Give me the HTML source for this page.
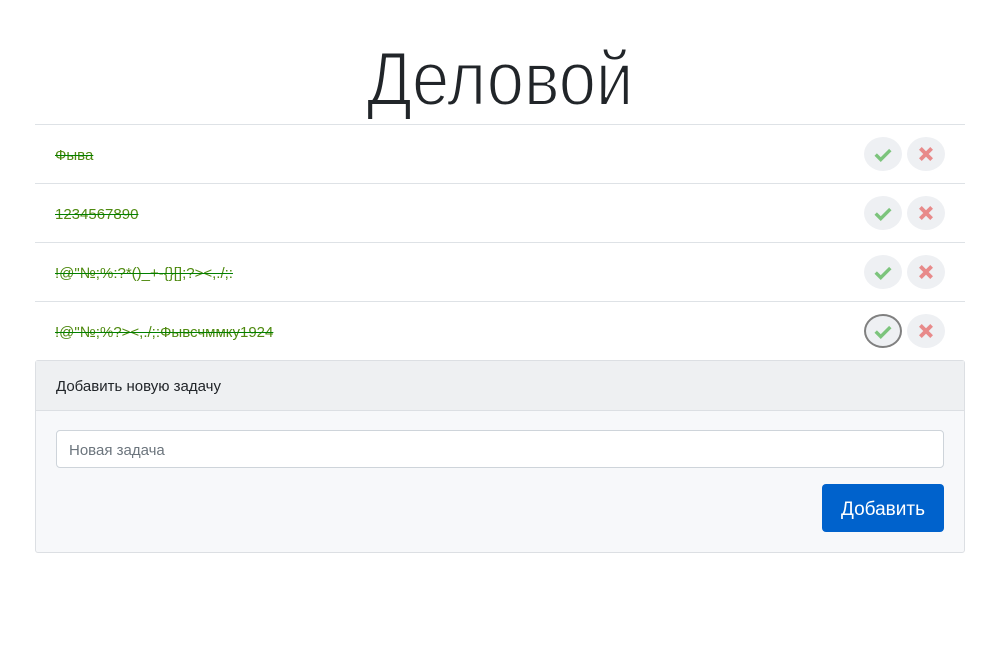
<!DOCTYPE html>
<html><head><meta charset="utf-8"><style>
body{margin:0;background:#fff;font-family:"Liberation Sans","DejaVu Sans",sans-serif;color:#212529;}
h1{margin:0;position:absolute;top:38px;left:0;width:1000px;text-align:center;font-weight:400;font-size:76px;line-height:84px;color:#212529;transform:scaleX(0.88);-webkit-text-stroke:2px #fff;paint-order:normal}
.list{position:absolute;top:124px;left:35px;width:930px}
.row{height:58px;border-top:1px solid #dee2e6;position:relative}
.row span{position:absolute;left:20px;top:22px;font-size:15px;color:#4f8a10;text-decoration:line-through;text-decoration-color:#008000}
.b{position:absolute;top:12px;width:38px;height:34px;border-radius:50%;background:#eef0f3;box-sizing:border-box}
.ok{left:829px}.no{left:872px}
.b svg{position:absolute;left:10px;top:8px}
.card{position:absolute;top:360px;left:35px;width:928px;height:191px;border:1px solid #dcdfe3;border-radius:3px;background:#f7f8fa}
.hd{height:49px;background:#eef0f2;border-bottom:1px solid #dcdfe3;font-size:15px;line-height:52px;padding-left:20px}
.in{position:absolute;left:20px;top:69px;border:1px solid #ced4da;border-radius:4px;background:#fff;font-size:15px;color:#6c757d;line-height:40px;padding-left:12px;box-sizing:border-box;width:888px;height:38px}
.btn{position:absolute;left:786px;top:123px;width:122px;height:48px;background:#0062cc;border-radius:4px;color:#fff;font-size:19px;line-height:52px;text-align:center}
</style></head><body>
<h1>Деловой</h1>
<div class="list">
<div class="row"><span>Фыва</span><div class="b ok"><svg width="18" height="18" viewBox="0 0 16 16"><path d="M1.5 8.5l4.5 4.5 8.5-8.5" stroke="#7cc47c" stroke-width="3" fill="none"/></svg></div><div class="b no"><svg width="18" height="18" viewBox="0 0 16 16"><path d="M3 3l10 10M13 3L3 13" stroke="#e88a8a" stroke-width="3.4"/></svg></div></div>
<div class="row"><span>1234567890</span><div class="b ok"><svg width="18" height="18" viewBox="0 0 16 16"><path d="M1.5 8.5l4.5 4.5 8.5-8.5" stroke="#7cc47c" stroke-width="3" fill="none"/></svg></div><div class="b no"><svg width="18" height="18" viewBox="0 0 16 16"><path d="M3 3l10 10M13 3L3 13" stroke="#e88a8a" stroke-width="3.4"/></svg></div></div>
<div class="row"><span>!@"№;%:?*()_+-{}[];?&gt;&lt;,./;:</span><div class="b ok"><svg width="18" height="18" viewBox="0 0 16 16"><path d="M1.5 8.5l4.5 4.5 8.5-8.5" stroke="#7cc47c" stroke-width="3" fill="none"/></svg></div><div class="b no"><svg width="18" height="18" viewBox="0 0 16 16"><path d="M3 3l10 10M13 3L3 13" stroke="#e88a8a" stroke-width="3.4"/></svg></div></div>
<div class="row"><span>!@"№;%?&gt;&lt;,./;:Фывсчммку1924</span><div class="b ok" style="border:2px solid #808080"><svg width="18" height="18" viewBox="0 0 16 16" style="left:8px;top:6px"><path d="M1.5 8.5l4.5 4.5 8.5-8.5" stroke="#7cc47c" stroke-width="3" fill="none"/></svg></div><div class="b no"><svg width="18" height="18" viewBox="0 0 16 16"><path d="M3 3l10 10M13 3L3 13" stroke="#e88a8a" stroke-width="3.4"/></svg></div></div>
</div>
<div class="card"><div class="hd">Добавить новую задачу</div><div class="in">Новая задача</div><div class="btn">Добавить</div></div>
</body></html>
